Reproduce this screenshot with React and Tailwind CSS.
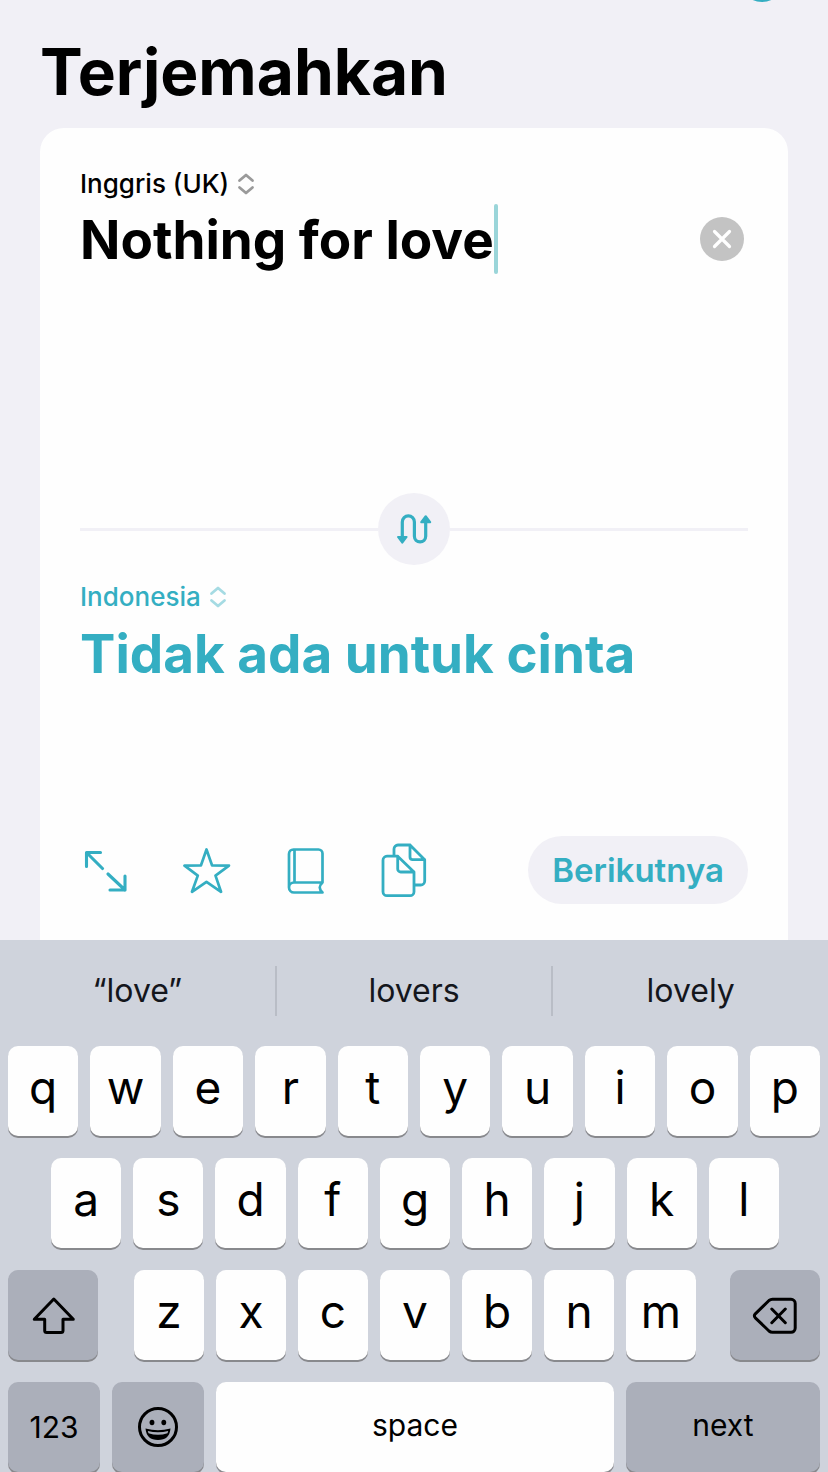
import React, { useState } from "react";

const LANGUAGES = ["Inggris (UK)", "Indonesia", "Jerman", "Jepang"];
const SUGGESTIONS = ["“love”", "lovers", "lovely"];
const TOP_ROW = ["q", "w", "e", "r", "t", "y", "u", "i", "o", "p"];
const HOME_ROW = ["a", "s", "d", "f", "g", "h", "j", "k", "l"];
const BOTTOM_ROW = ["z", "x", "c", "v", "b", "n", "m"];

const ChevronsIcon = ({ className }) => (
  <svg viewBox="0 0 18 24" className={`w-[18px] h-6 ${className}`} fill="none" stroke="currentColor" strokeWidth="2.8" strokeLinecap="round" strokeLinejoin="round">
    <path d="M2.5 8.5L9 3L15.5 8.5M2.5 15.5L9 21L15.5 15.5" />
  </svg>
);

const SwapIcon = () => (
  <svg viewBox="0 0 36 32" className="w-9 h-8" fill="none" stroke="currentColor" strokeWidth="3.2">
    <path d="M6.3 25V9a6 6 0 0 1 12.1 0V23.3a5.65 5.65 0 0 0 11.3 0V8" />
    <path d="M2 24H10.6L6.3 29.6ZM25.2 9.2H34.2L29.7 3.2Z" fill="currentColor" strokeWidth="2" strokeLinejoin="round" />
  </svg>
);

const ExpandIcon = () => (
  <svg viewBox="0 0 44 44" className="w-11 h-11" fill="none" stroke="currentColor" strokeWidth="3.1" strokeLinecap="round" strokeLinejoin="round">
    <path d="M2.5 18.5V4.5H16.5M3 5L18.5 20.5M24 26L41 42M26 42H41V28" />
  </svg>
);

const StarIcon = () => (
  <svg viewBox="0 0 48 48" className="w-12 h-12" fill="none" stroke="currentColor" strokeWidth="2.7" strokeLinecap="round" strokeLinejoin="round">
    <path d="M23.5 3.5L29 19.3L46 19.6L32.5 29.6L38 45.8L23.5 35.8L9 45.8L14.8 29.6L1.5 19.6L18 19.3Z" />
  </svg>
);

const BookIcon = () => (
  <svg viewBox="0 0 40 48" className="w-10 h-12" fill="none" stroke="currentColor" strokeWidth="2.7" strokeLinecap="round" strokeLinejoin="round">
    <path d="M3 41.5V8a4.5 4.5 0 0 1 4.5-4.5H32.5a4 4 0 0 1 4 4V36.5H8a5 5 0 0 0 0 10H36.5q-5.5-5 0-10M8.5 3.5V36.5" />
  </svg>
);

const CopyIcon = () => (
  <svg viewBox="0 0 48 56" className="w-12 h-14" fill="none" stroke="currentColor" strokeWidth="2.8" strokeLinecap="round" strokeLinejoin="round">
    <path d="M16.7 14.2H6a4 4 0 0 0-4 4V49.7a4 4 0 0 0 4 4H29a4 4 0 0 0 4-4V30L16.7 14.2V27a3 3 0 0 0 3 3H33" />
    <path d="M13 13.5V7a4 4 0 0 1 4-4H29L43.7 17.7V39a4 4 0 0 1-4 4H33.5M29 3V15a2.7 2.7 0 0 0 2.7 2.7H43.7" />
  </svg>
);

const ShiftIcon = () => (
  <svg viewBox="0 0 44 40" className="w-11 h-10" fill="none" stroke="currentColor" strokeWidth="3" strokeLinejoin="round">
    <path d="M22.8 4L3.3 24.3H13.7V35.5a2 2 0 0 0 2 2H30a2 2 0 0 0 2-2V24.3H42.3Z" />
  </svg>
);

const BackspaceIcon = () => (
  <svg viewBox="0 0 46 40" className="w-[46px] h-10" fill="none" stroke="currentColor" strokeWidth="3" strokeLinecap="round" strokeLinejoin="round">
    <path d="M17 5.5Q18.5 4.3 20.5 4.3H39a4.2 4.2 0 0 1 4.2 4.2V33.1a4.2 4.2 0 0 1-4.2 4.2H20.5Q18.5 37.3 17 36L3.3 22.8Q1.5 20.8 3.3 18.8ZM19.8 14L33.3 27.7M33.3 14L19.8 27.7" />
  </svg>
);

const EmojiIcon = () => (
  <svg viewBox="0 0 44 44" className="w-11 h-11" fill="none" stroke="currentColor" strokeWidth="3">
    <circle cx="22" cy="22" r="18.5" />
    <ellipse cx="16" cy="17.5" rx="2.4" ry="2.8" fill="currentColor" stroke="none" />
    <ellipse cx="27.8" cy="17.5" rx="2.4" ry="2.8" fill="currentColor" stroke="none" />
    <path d="M9.5 23.5Q22 27 34.5 23.5Q33.5 35 22 35Q10.5 35 9.5 23.5Z" fill="currentColor" stroke="none" />
    <path d="M11.8 26Q22 28.5 32.2 26L31.5 28.2Q22 31.5 12.5 28.2Z" fill="#abafba" stroke="none" />
  </svg>
);

const LanguageSelect = ({ label, value, onChange, chevronClass }) => (
  <div className="flex h-10 items-center gap-2">
    <select
      aria-label={label}
      value={value}
      onChange={(e) => onChange(e.target.value)}
      className="field-sizing-content h-10 appearance-none bg-transparent text-[26px] leading-10 font-medium outline-none"
    >
      {LANGUAGES.map((name) => (
        <option key={name}>{name}</option>
      ))}
    </select>
    <ChevronsIcon className={chevronClass} />
  </div>
);

const LetterKey = ({ letter, onPress }) => (
  <button
    type="button"
    onClick={() => onPress(letter)}
    className="flex h-[90px] min-w-0 flex-1 basis-0 justify-center rounded-[10px] bg-[#fefefe] pt-3 text-[46px] leading-[58px] font-normal shadow-[0_2px_0_#88898d]"
  >
    {letter}
  </button>
);

const App = () => {
  const [text, setText] = useState("Nothing for love");
  const [source, setSource] = useState("Inggris (UK)");
  const [target, setTarget] = useState("Indonesia");

  const type = (char) => setText((prev) => prev + char);

  const swapLanguages = () => {
    setSource(target);
    setTarget(source);
  };

  return (
    <div className="flex min-h-screen flex-col overflow-hidden bg-[#f1f0f6] font-['Inter',sans-serif] text-black">
      {/* toolbar is scrolled almost out of view */}
      <header className="-mt-[42px] flex justify-end px-11">
        <button type="button" aria-label="Lainnya" className="size-11 rounded-full border-[3px] border-[#34aec2]" />
      </header>

      <main className="flex flex-1 flex-col px-10">
        <h1 className="mt-[30px] mb-4 text-[64px] leading-[80px] font-bold">Terjemahkan</h1>

        <div className="flex flex-1 flex-col rounded-t-[24px] bg-[#fefefe] px-10 pt-9 pb-9">
          <section className="min-h-[329px]">
            <LanguageSelect label="Bahasa sumber" value={source} onChange={setSource} chevronClass="text-[#9a9a9a]" />
            <div className="flex h-[70px] items-center pr-1">
              <input
                aria-label="Teks"
                value={text}
                onChange={(e) => setText(e.target.value)}
                className="field-sizing-content min-w-0 bg-transparent pt-0.5 text-[53px] leading-[70px] font-bold caret-[#34aec2] outline-none"
              />
              <span className="h-full w-1 shrink-0 rounded-sm bg-[#9ad5d9]" />
              <button
                type="button"
                aria-label="Hapus teks"
                onClick={() => setText("")}
                className="ml-auto flex size-11 shrink-0 items-center justify-center rounded-full bg-[#c3c3c3] text-white"
              >
                <svg viewBox="0 0 20 20" className="size-5" stroke="currentColor" strokeWidth="3.2" strokeLinecap="round">
                  <path d="M2.5 2.5L17.5 17.5M17.5 2.5L2.5 17.5" />
                </svg>
              </button>
            </div>
          </section>

          <div className="flex items-center">
            <div className="h-[3px] flex-1 bg-[#f1f0f6]" />
            <button
              type="button"
              aria-label="Tukar bahasa"
              onClick={swapLanguages}
              className="flex size-[72px] items-center justify-center rounded-full bg-[#f1f0f6] text-[#34aec2]"
            >
              <SwapIcon />
            </button>
            <div className="h-[3px] flex-1 bg-[#f1f0f6]" />
          </div>

          <section className="mt-3 flex-1 text-[#34aec2]">
            <LanguageSelect label="Bahasa tujuan" value={target} onChange={setTarget} chevronClass="text-[#a5dbe3]" />
            <p className="mt-0.5 text-[53px] leading-[70px] font-bold">Tidak ada untuk cinta</p>
          </section>

          <div className="flex items-center justify-between text-[#34aec2]">
            <div className="flex items-center gap-[55px] pl-1">
              <button type="button" aria-label="Layar penuh">
                <ExpandIcon />
              </button>
              <button type="button" aria-label="Favorit">
                <StarIcon />
              </button>
              <button type="button" aria-label="Kamus">
                <BookIcon />
              </button>
              <button type="button" aria-label="Salin">
                <CopyIcon />
              </button>
            </div>
            <button type="button" className="h-[68px] rounded-full bg-[#f1f0f6] px-6 text-[33px] leading-10 font-semibold">
              Berikutnya
            </button>
          </div>
        </div>
      </main>

      <div className="bg-[#cfd3dc]">
        <div className="flex h-[106px] items-center pb-1">
          {SUGGESTIONS.map((word, i) => (
            <button
              type="button"
              key={word}
              className={`h-[50px] flex-1 basis-0 text-[32px] leading-10 text-[#14161c] ${
                i < SUGGESTIONS.length - 1 ? "border-r-2 border-[#b9bdc6]" : ""
              }`}
            >
              {word}
            </button>
          ))}
        </div>

        <div className="flex flex-col gap-[22px]">
          <div className="flex gap-3 px-2">
            {TOP_ROW.map((letter) => (
              <LetterKey key={letter} letter={letter} onPress={type} />
            ))}
          </div>
          <div className="flex gap-3 pr-[49px] pl-[51px]">
            {HOME_ROW.map((letter) => (
              <LetterKey key={letter} letter={letter} onPress={type} />
            ))}
          </div>
          <div className="flex px-2">
            <button
              type="button"
              aria-label="Shift"
              className="flex h-[90px] w-[90px] items-center justify-center rounded-[10px] bg-[#abafba] shadow-[0_2px_0_#88898d]"
            >
              <ShiftIcon />
            </button>
            <div className="flex flex-1 gap-3 pr-[34px] pl-9">
              {BOTTOM_ROW.map((letter) => (
                <LetterKey key={letter} letter={letter} onPress={type} />
              ))}
            </div>
            <button
              type="button"
              aria-label="Backspace"
              onClick={() => setText((prev) => prev.slice(0, -1))}
              className="flex h-[90px] w-[90px] items-center justify-center rounded-[10px] bg-[#abafba] shadow-[0_2px_0_#88898d]"
            >
              <BackspaceIcon />
            </button>
          </div>
          <div className="flex gap-3 px-2 text-[30px] leading-10">
            <button type="button" className="h-[90px] w-[92px] rounded-[10px] bg-[#abafba] shadow-[0_2px_0_#88898d]">
              123
            </button>
            <button
              type="button"
              aria-label="Emoji"
              className="flex h-[90px] w-[92px] items-center justify-center rounded-[10px] bg-[#abafba] shadow-[0_2px_0_#88898d]"
            >
              <EmojiIcon />
            </button>
            <button
              type="button"
              onClick={() => type(" ")}
              className="h-[90px] flex-1 rounded-[10px] bg-[#fefefe] pb-1 shadow-[0_2px_0_#88898d]"
            >
              space
            </button>
            <button type="button" className="h-[90px] w-[194px] rounded-[10px] bg-[#abafba] pb-1 shadow-[0_2px_0_#88898d]">
              next
            </button>
          </div>
        </div>
      </div>
    </div>
  );
};

export default App;
